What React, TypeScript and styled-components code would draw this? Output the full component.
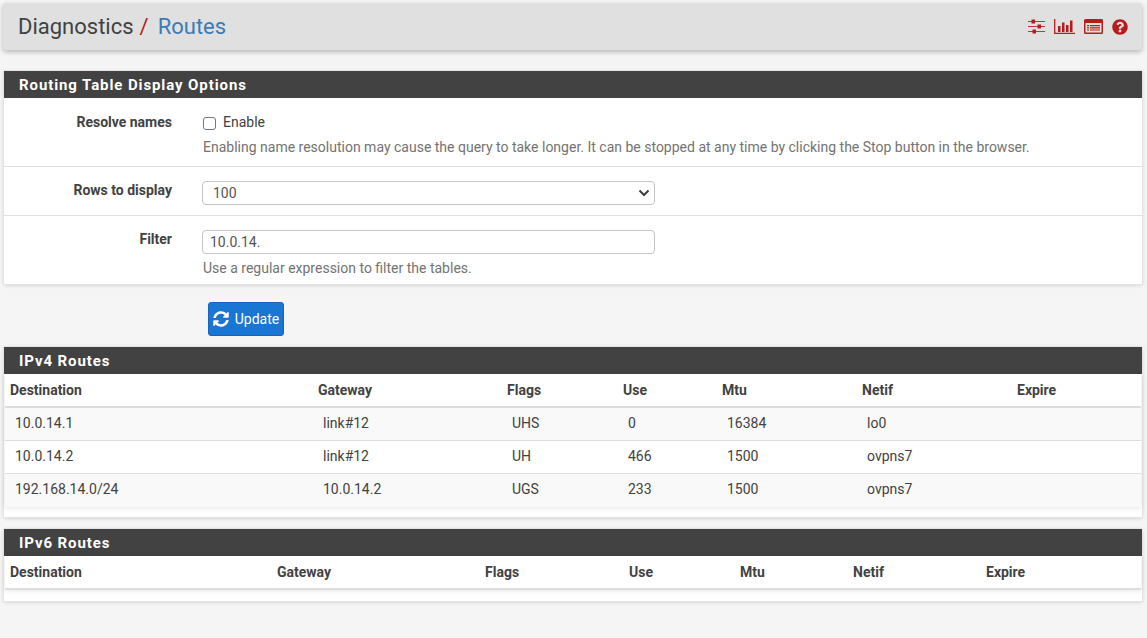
import styled, { createGlobalStyle } from "styled-components";
import { FaQuestionCircle, FaSyncAlt } from "react-icons/fa";

const GlobalStyle = createGlobalStyle`
  * { box-sizing: border-box; }
  html, body { margin: 0; padding: 0; background: #f5f5f5; }
  body {
    font-family: Roboto, "Liberation Sans", sans-serif;
    font-size: 14px;
    color: #424242;
  }
`;

const Page = styled.div`
  width: 1147px;
  height: 638px;
  padding: 3px 5px 0 4px;
  overflow: hidden;
`;

const Header = styled.div`
  height: 47px;
  margin-left: -1px;
  margin-bottom: 21px;
  padding: 0 14px 0 15px;
  display: flex;
  align-items: center;
  justify-content: space-between;
  background: #e0e0e0;
  border-radius: 3px;
  box-shadow: 0 2px 5px rgba(0, 0, 0, 0.26);
`;

const Crumbs = styled.h1`
  margin: 0;
  padding-bottom: 1px;
  font-size: 22px;
  font-weight: 400;
  color: #424242;
`;

const Sep = styled.span`
  color: #b71c1c;
  margin: 0 9px 0 6px;
`;

const Current = styled.span`
  color: #3d7ab8;
`;

const Icons = styled.div`
  display: flex;
  align-items: center;
  gap: 9px;
  color: #b71c1c;
  svg { display: block; }
`;

const Panel = styled.section<{ $after: number }>`
  background: #fff;
  margin-bottom: ${(p) => p.$after}px;
  box-shadow: 0 0 0 1px #e4e4e4, 0 1px 4px rgba(0, 0, 0, 0.18);
`;

const PanelHead = styled.h2`
  margin: 0;
  height: 27px;
  padding: 0 15px;
  background: #424242;
  color: #fff;
  font-size: 15px;
  font-weight: 700;
  letter-spacing: 0.9px;
  line-height: 28px;
`;

const FormRow = styled.div<{ $height: number; $top: number }>`
  height: ${(p) => p.$height}px;
  padding-top: ${(p) => p.$top}px;
  display: grid;
  grid-template-columns: 168px 452px;
  column-gap: 31px;
  align-content: start;
  border-bottom: 1px solid #e0e0e0;
  &:last-child { border-bottom: 0; }
`;

const Label = styled.label`
  text-align: right;
  font-weight: 700;
  line-height: 20px;
`;

const Field = styled.div`
  white-space: nowrap;
`;

const CheckLine = styled.label`
  display: flex;
  align-items: center;
  gap: 7px;
  height: 20px;
`;

const Check = styled.span`
  width: 13px;
  height: 13px;
  margin-top: 2px;
  background: #fff;
  border: 1px solid #767676;
  border-radius: 3px;
`;

const Help = styled.div<{ $gap: number }>`
  margin-top: ${(p) => p.$gap}px;
  color: #737373;
  line-height: 20px;
`;

const Control = styled.div<{ $inset: number }>`
  height: 24px;
  margin: 1px 0 0 -1px;
  padding: 0 4px 0 ${(p) => p.$inset}px;
  display: flex;
  align-items: center;
  justify-content: space-between;
  background: #fff;
  border: 1px solid #c4c4c4;
  border-radius: 4px;
  color: #555;
  font-size: 14px;
  svg { display: block; }
`;

const Actions = styled.div`
  padding: 18px 0 11px 204px;
`;

const UpdateButton = styled.button`
  width: 76px;
  height: 34px;
  padding: 0 0 1px;
  display: flex;
  align-items: center;
  justify-content: center;
  gap: 6px;
  background: #1976d2;
  border: 1px solid #1565c0;
  border-radius: 3px;
  color: #fff;
  font-family: inherit;
  font-size: 14px;
`;

const Table = styled.table`
  width: 1136px;
  margin-left: 1px;
  border-collapse: separate;
  border-spacing: 0;
  table-layout: fixed;
  box-shadow: 0 1px 5px rgba(0, 0, 0, 0.1);
`;

const Th = styled.th`
  height: 34px;
  padding: 0 5px;
  text-align: left;
  font-weight: 700;
  color: #424242;
  border-bottom: 2px solid #ddd;
`;

const Tr = styled.tr`
  &:nth-child(odd) { background: #f9f9f9; }
  &:not(:last-child) td { border-bottom: 1px solid #ddd; }
  &:last-child td { padding-bottom: 3px; }
`;

const Td = styled.td`
  height: 33px;
  padding: 0 10px 2px;
`;

const TableEnd = styled.div<{ $height: number }>`
  height: ${(p) => p.$height}px;
`;

const SliderIcon = () => (
  <svg width="17" height="15" viewBox="0 0 17 15">
    <path d="M0 2.500h17M0 7.500h17M0 12.500h17" stroke="#b71c1c" strokeWidth="1.100" opacity="0.85" />
    <rect x="3.500" y="0.500" width="3.500" height="4" fill="#b71c1c" />
    <rect x="9.500" y="5.500" width="3.500" height="4" fill="#b71c1c" />
    <rect x="4.500" y="10.500" width="3.500" height="4" fill="#b71c1c" />
  </svg>
);

const ChartIcon = () => (
  <svg width="21" height="15" viewBox="0 0 21 15">
    <path d="M.7 0v14.300H21" fill="none" stroke="#b71c1c" strokeWidth="1.300" />
    <path d="M4 7h2.500v6H4zM8 3.500h2.500V13H8zM12 6h2.500v7H12zM16 1.500h2.500V13H16z" fill="#b71c1c" />
  </svg>
);

const ListIcon = () => (
  <svg width="19" height="15" viewBox="0 0 19 15">
    <path
      fillRule="evenodd"
      d="M1.500 0h16A1.500 1.500 0 0 1 19 1.500v12a1.500 1.500 0 0 1-1.500 1.500h-16A1.500 1.500 0 0 1 0 13.500v-12A1.500 1.500 0 0 1 1.500 0zM1.500 4v9.500h16V4z"
      fill="#b71c1c"
    />
    <path d="M3 6h2v1.200H3zM6 6h10v1.200H6zM3 8.200h2v1.200H3zM6 8.200h10v1.200H6zM3 10.400h2v1.200H3zM6 10.400h10v1.200H6z" fill="#b71c1c" />
  </svg>
);

const CaretIcon = () => (
  <svg width="12" height="8" viewBox="0 0 12 8">
    <path d="M1.500 1.500 6 6l4.500-4.500" fill="none" stroke="#3f3f3f" strokeWidth="2" />
  </svg>
);

const COLUMNS = ["Destination", "Gateway", "Flags", "Use", "Mtu", "Netif", "Expire"];

const IPV4_WIDTHS = [308, 189, 116, 99, 140, 155, 129];
const IPV6_WIDTHS = [267, 208, 144, 111, 113, 133, 160];

const IPV4_ROUTES = [
  ["10.0.14.1", "link#12", "UHS", "0", "16384", "lo0", ""],
  ["10.0.14.2", "link#12", "UH", "466", "1500", "ovpns7", ""],
  ["192.168.14.0/24", "10.0.14.2", "UGS", "233", "1500", "ovpns7", ""],
];

function RouteTable({ widths, rows }: { widths: number[]; rows: string[][] }) {
  return (
    <Table>
      <colgroup>
        {widths.map((w, i) => (
          <col key={i} width={w} />
        ))}
      </colgroup>
      <thead>
        <tr>
          {COLUMNS.map((c) => (
            <Th key={c}>{c}</Th>
          ))}
        </tr>
      </thead>
      <tbody>
        {rows.map((row) => (
          <Tr key={row[0]}>
            {row.map((cell, i) => (
              <Td key={i}>{cell}</Td>
            ))}
          </Tr>
        ))}
      </tbody>
    </Table>
  );
}

export default function App() {
  return (
    <Page>
      <GlobalStyle />
      <Header>
        <Crumbs>
          Diagnostics
          <Sep>/</Sep>
          <Current>Routes</Current>
        </Crumbs>
        <Icons>
          <SliderIcon />
          <ChartIcon />
          <ListIcon />
          <FaQuestionCircle size={16} />
        </Icons>
      </Header>

      <Panel $after={0}>
        <PanelHead>Routing Table Display Options</PanelHead>
        <FormRow $height={69} $top={14}>
          <Label>Resolve names</Label>
          <Field>
            <CheckLine>
              <Check />
              Enable
            </CheckLine>
            <Help $gap={5}>
              Enabling name resolution may cause the query to take longer. It can be stopped at any
              time by clicking the Stop button in the browser.
            </Help>
          </Field>
        </FormRow>
        <FormRow $height={49} $top={13}>
          <Label>Rows to display</Label>
          <Field>
            <Control $inset={10}>
              100
              <CaretIcon />
            </Control>
          </Field>
        </FormRow>
        <FormRow $height={68} $top={13}>
          <Label>Filter</Label>
          <Field>
            <Control $inset={7}>10.0.14.</Control>
            <Help $gap={4}>Use a regular expression to filter the tables.</Help>
          </Field>
        </FormRow>
      </Panel>

      <Actions>
        <UpdateButton>
          <FaSyncAlt size={16} />
          Update
        </UpdateButton>
      </Actions>

      <Panel $after={12}>
        <PanelHead>IPv4 Routes</PanelHead>
        <RouteTable widths={IPV4_WIDTHS} rows={IPV4_ROUTES} />
        <TableEnd $height={10} />
      </Panel>

      <Panel $after={0}>
        <PanelHead>IPv6 Routes</PanelHead>
        <RouteTable widths={IPV6_WIDTHS} rows={[]} />
        <TableEnd $height={11} />
      </Panel>
    </Page>
  );
}
